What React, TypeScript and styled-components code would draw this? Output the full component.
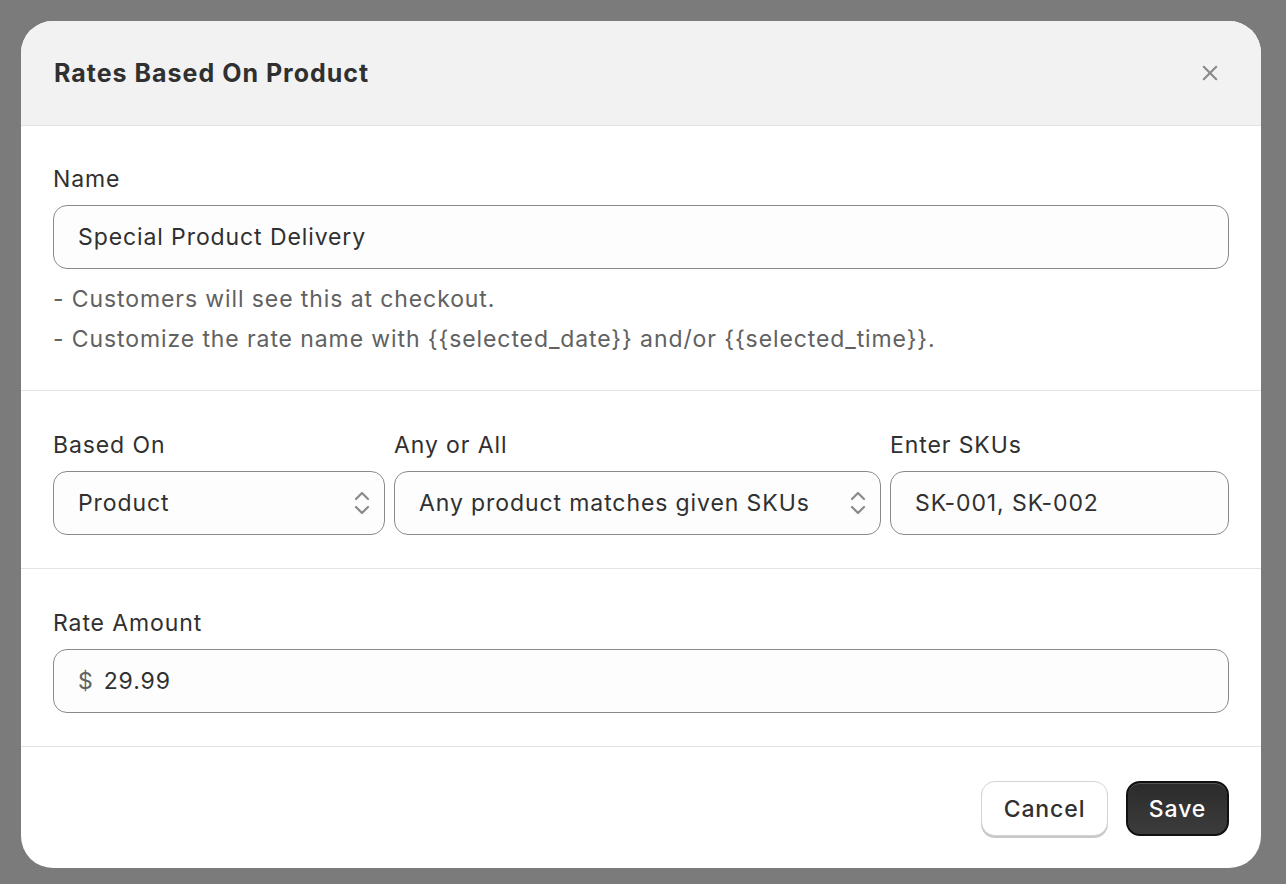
import React from "react";
import styled, { createGlobalStyle } from "styled-components";

const Global = createGlobalStyle`
  html, body { margin: 0; padding: 0; }
  body { background: #7b7b7b; font-family: Inter, "Noto Sans", sans-serif; }
  * { box-sizing: border-box; }
`;

const Backdrop = styled.div`
  width: 1286px; height: 884px; padding: 21px 25px 16px 21px; background: #7b7b7b;
`;
const Modal = styled.div`
  width: 1240px; height: 847px; background: #fff; border-radius: 32px; overflow: hidden;
  display: flex; flex-direction: column; color: #303030; letter-spacing: 0.9px;
`;
const Header = styled.div`
  height: 106px; background: #f2f2f2; border-bottom: 1px solid #e3e3e3;
  display: flex; align-items: center; justify-content: space-between; padding: 0 43px 0 33px;
`;
const Title = styled.h1`margin: 0; font-size: 25px; font-weight: 700; color: #303030; letter-spacing: 1px;`;
const Close = styled.button`border: 0; background: none; padding: 0; display: flex; color: #8a8a8a; cursor: pointer;`;
const Section = styled.div<{ pt: number; pb: number }>`
  padding: ${p => p.pt}px 32px ${p => p.pb}px 32px; border-bottom: 1px solid #e3e3e3;
`;
const Label = styled.div`font-size: 23px; line-height: 28px; margin-bottom: 12px; color: #303030;`;
const Field = styled.div`
  height: 64px; border: 1px solid #8a8a8a; border-radius: 14px; background: #fdfdfd;
  display: flex; align-items: center; padding: 0 12px 0 24px; font-size: 23px; color: #303030; gap: 10px;
`;
const Help = styled.div`margin-top: 10px; font-size: 23px; line-height: 40px; color: #616161;`;
const Grid = styled.div`display: grid; grid-template-columns: 332px 487px 1fr; gap: 9px;`;
const Grow = styled.span`flex: 1; white-space: nowrap; overflow: hidden;`;
const Dollar = styled.span`color: #616161;`;
const Footer = styled.div`display: flex; justify-content: flex-end; gap: 18px; padding: 34px 32px 32px;`;
const Btn = styled.button<{ primary?: boolean }>`
  height: 55px; padding: 0; border-radius: 14px; font: 500 23px Inter, sans-serif; letter-spacing: 0.9px;
  ${p => p.primary
    ? `background: linear-gradient(#2b2b2b, #3c3c3c); color: #fff; border: 2px solid #111; box-shadow: inset 0 1px 0 #555; width: 103px;`
    : `background: #fff; color: #303030; border: 1px solid #d4d4d4; box-shadow: 0 2px 0 #c8c8c8; width: 127px;`}
`;

const Chevrons = () => (
  <svg width="20" height="26" viewBox="0 0 20 26" fill="none" stroke="#8a8a8a" strokeWidth="2.2" strokeLinecap="round" strokeLinejoin="round">
    <path d="M4 9l6-6 6 6" /><path d="M4 17l6 6 6-6" />
  </svg>
);

export default function App() {
  return (
    <Backdrop>
      <Global />
      <Modal>
        <Header>
          <Title>Rates Based On Product</Title>
          <Close aria-label="Close">
            <svg width="16" height="16" viewBox="0 0 18 18" stroke="#8a8a8a" strokeWidth="2.4" strokeLinecap="round"><path d="M2 2l14 14M16 2L2 16" /></svg>
          </Close>
        </Header>
        <Section pt={39} pb={31}>
          <Label>Name</Label>
          <Field>Special Product Delivery</Field>
          <Help>
            <div>- Customers will see this at checkout.</div>
            <div>- Customize the rate name with {"{{selected_date}}"} and/or {"{{selected_time}}"}.</div>
          </Help>
        </Section>
        <Section pt={40} pb={33}>
          <Grid>
            <div><Label>Based On</Label><Field><Grow>Product</Grow><Chevrons /></Field></div>
            <div><Label>Any or All</Label><Field><Grow>Any product matches given SKUs</Grow><Chevrons /></Field></div>
            <div><Label>Enter SKUs</Label><Field>SK-001, SK-002</Field></div>
          </Grid>
        </Section>
        <Section pt={40} pb={33}>
          <Label>Rate Amount</Label>
          <Field><Dollar>$</Dollar>29.99</Field>
        </Section>
        <Footer>
          <Btn>Cancel</Btn>
          <Btn primary>Save</Btn>
        </Footer>
      </Modal>
    </Backdrop>
  );
}
